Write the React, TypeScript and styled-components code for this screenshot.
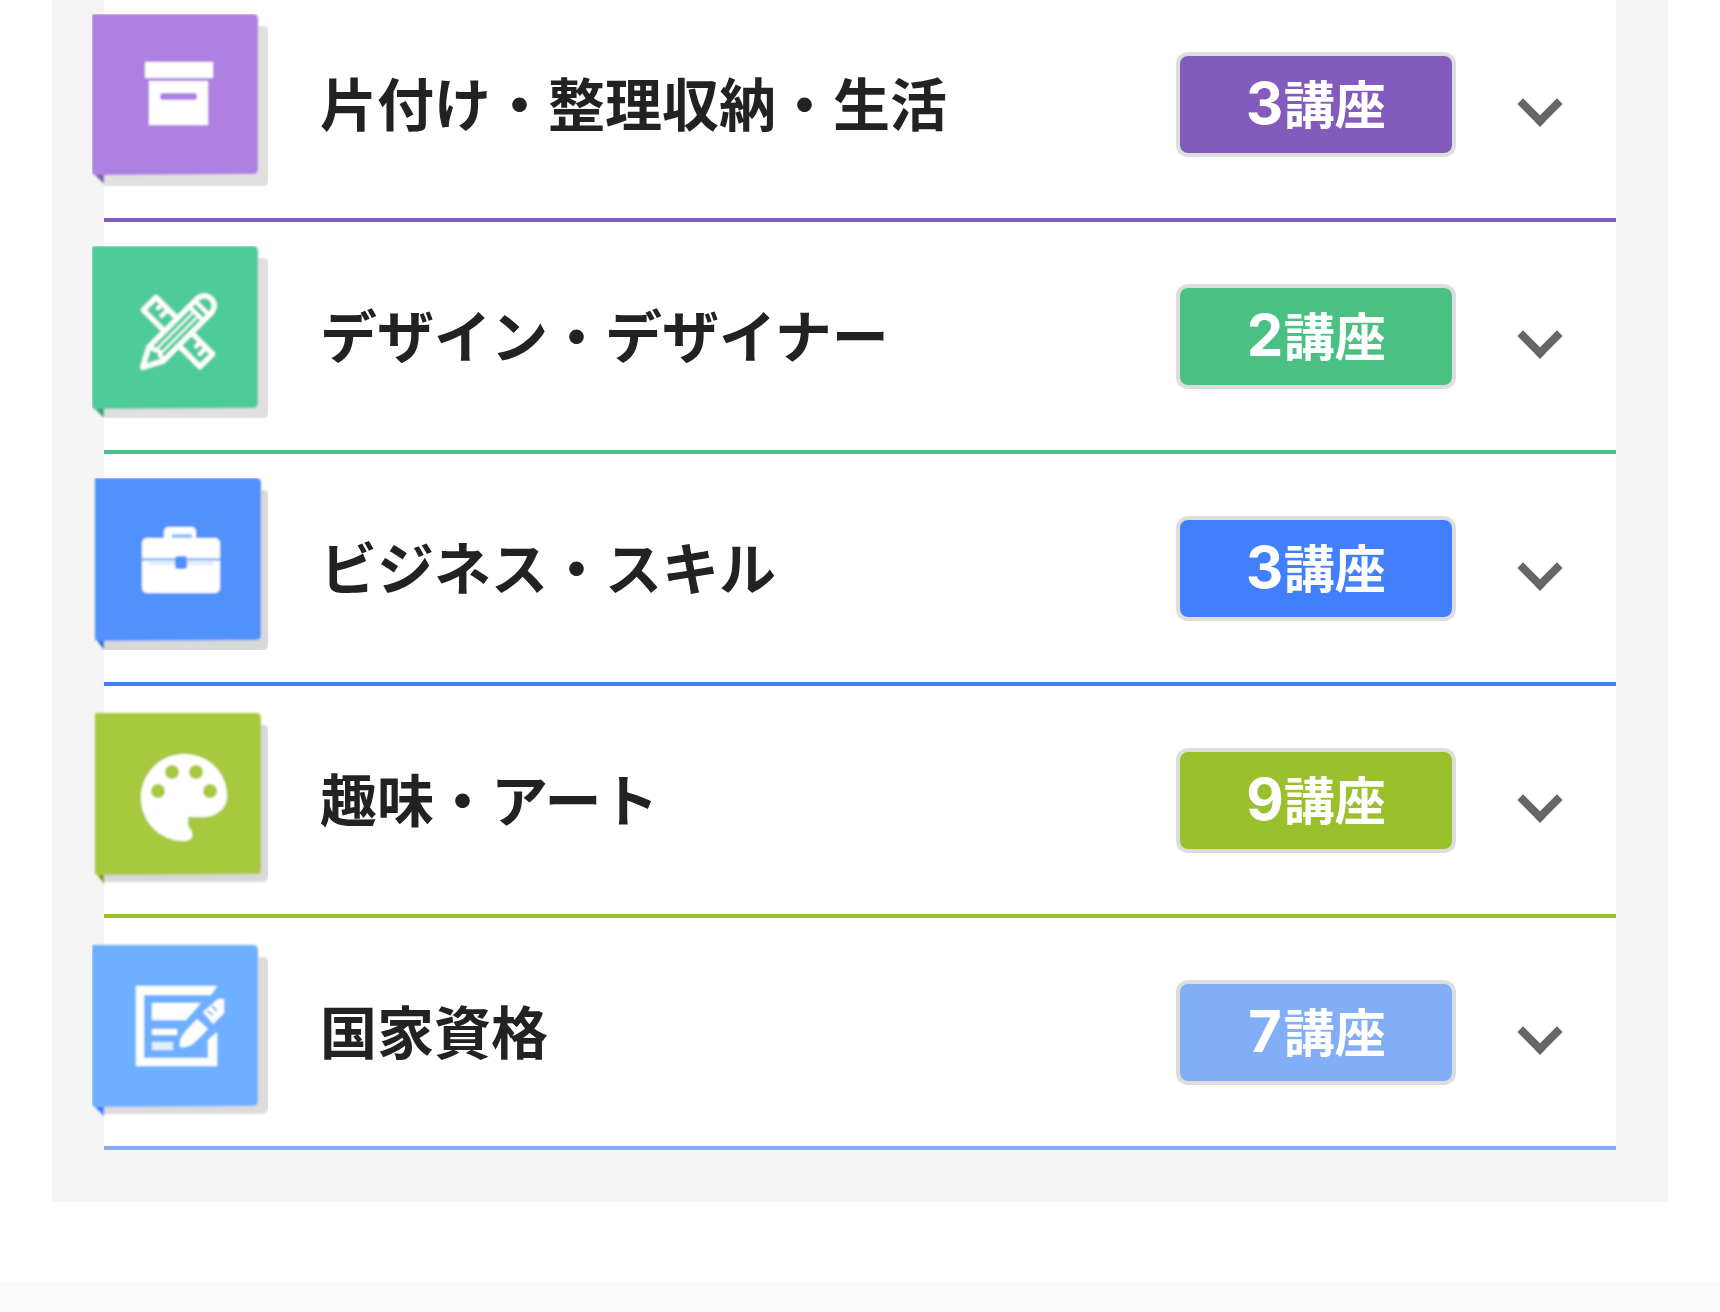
import React, { useState } from "react";
import styled, { createGlobalStyle } from "styled-components";

const GlobalStyle = createGlobalStyle`
  *, *::before, *::after { box-sizing: border-box; }
  body {
    margin: 0;
    background: #fff;
    color: #222;
    font-family: "Noto Sans CJK JP", sans-serif;
  }
`;

const Main = styled.main`
  display: flow-root;
`;

const Panel = styled.section`
  margin: -10px 52px 80px;
  padding: 0 52px 52px;
  background: #f5f5f5;
`;

const List = styled.ul`
  margin: 0;
  padding: 0;
  list-style: none;
  background: #fff;
`;

const Row = styled.li<{ $color: string }>`
  border-bottom: 4px solid ${(p) => p.$color};
`;

const RowButton = styled.button`
  display: flex;
  align-items: center;
  width: 100%;
  min-height: 228px;
  margin: 0;
  padding: 0 60px 0 0;
  border: 0;
  background: none;
  color: inherit;
  font: inherit;
  text-align: left;
  cursor: pointer;
`;

const Tile = styled.svg`
  flex: none;
  width: 176px;
  height: 180px;
  margin-left: -12px;
`;

const Title = styled.span`
  flex: 1;
  min-width: 0;
  padding: 0 0 6px 52px;
  font-size: 57px;
  font-weight: 700;
  line-height: 80px;
`;

const Badge = styled.span<{ $color: string }>`
  display: flex;
  flex: none;
  align-items: baseline;
  justify-content: center;
  width: 280px;
  padding: 6px 0 10px;
  border: 4px solid #ddd;
  border-radius: 12px;
  background: ${(p) => p.$color};
  color: #fff;
  font-size: 51px;
  font-weight: 700;
  line-height: 80px;
`;

const Count = styled.span`
  font-family: Inter, "Noto Sans CJK JP", sans-serif;
  font-size: 58px;
  font-variant-numeric: tabular-nums;
`;

const Chevron = styled.span<{ $open: boolean }>`
  flex: none;
  width: 32px;
  height: 32px;
  margin-left: 68px;
  border: solid #666;
  border-width: 0 8px 8px 0;
  transform: rotate(${(p) => (p.$open ? 225 : 45)}deg);
`;

const Footer = styled.footer`
  min-height: 30px;
  background: #fafafa;
`;

type Kind = "archive" | "design" | "business" | "art" | "license";

function Glyph({ kind, tile }: { kind: Kind; tile: string }) {
  switch (kind) {
    case "archive":
      return (
        <g fill="#fff">
          <rect x="53" y="48" width="68" height="16" />
          <rect x="57" y="67" width="59" height="44" />
          <rect x="68" y="79" width="37" height="7" rx="3" fill={tile} />
        </g>
      );
    case "design":
      return (
        <g transform="translate(86 86)" fill={tile} stroke="#fff" strokeWidth="5" strokeLinejoin="round">
          <g transform="rotate(45)">
            <rect x="-40" y="-9" width="80" height="18" />
            <path d="M-31 -8V-1M-23 -8V2M23 -8V-1M31 -8V2" strokeWidth="4" />
          </g>
          <g transform="rotate(-45)">
            <path d="M-50 0L-31 -10H38Q47 -8 47 0T38 10H-31Z" />
            <path d="M-31 -3H26M-31 3H26" strokeWidth="2" />
            <path d="M26 -10V10M34 -10V10" strokeWidth="4" />
            <path d="M-31 -10L-27 0L-31 10" fill="none" strokeWidth="4" />
          </g>
        </g>
      );
    case "business":
      return (
        <g fill="#fff">
          <path d="M72 60V54Q72 49 77 49H99Q104 49 104 54V60Z" />
          <rect x="50" y="60" width="78" height="55" rx="5" />
          <rect x="80" y="56" width="20" height="4" fill={tile} opacity="0.6" />
          <rect x="50" y="80" width="78" height="3" fill={tile} opacity="0.6" />
          <rect x="57" y="84" width="64" height="3" fill={tile} opacity="0.2" />
          <rect x="83" y="78" width="12" height="13" rx="3" fill={tile} />
        </g>
      );
    case "art":
      return (
        <g fill="#fff">
          <path d="M92 44C68 44 49 64 49 88C49 112 68 131 92 131C98 131 101 128 100 124C100 118 96 119 96 114V107H111C125 107 135 98 135 86C135 62 116 44 92 44Z" />
          <g fill={tile}>
            <circle cx="66" cy="81" r="7" />
            <circle cx="80" cy="62" r="7" />
            <circle cx="104" cy="62" r="7" />
            <circle cx="118" cy="81" r="7" />
          </g>
        </g>
      );
    case "license":
      return (
        <g fill="#fff">
          <path d="M44 44H125L119 53H52V116H116V98L125 90V124H44Z" />
          <path d="M60 61H109L94 78H60Z" />
          <rect x="60" y="87" width="25" height="6" />
          <rect x="60" y="100" width="21" height="8" opacity="0.8" />
          <path d="M88 105Q87 96 93 90L105 77L116 87L103 100Q97 106 88 105Z" />
          <path d="M111 70L126 57H132V71L121 82Z" />
          <path d="M115 69L121 73M120 64L125 69" stroke={tile} strokeWidth="2" />
        </g>
      );
  }
}

interface Category {
  kind: Kind;
  title: string;
  count: number;
  color: string;
  tile: string;
  fold: string;
  shadow: string;
  x: number;
  top: number;
  bottom: number;
  end: number;
}

const categories: Category[] = [
  { kind: "archive", title: "片付け・整理収納・生活", count: 3, color: "#835bbc", tile: "#ad80e1", fold: "#7e62a8", shadow: "#e0e0e0", x: 0, top: 0, bottom: 160, end: 173 },
  { kind: "design", title: "デザイン・デザイナー", count: 2, color: "#4bc083", tile: "#4ecb99", fold: "#3e9c79", shadow: "#e0e0e0", x: 0, top: 0, bottom: 162, end: 173 },
  { kind: "business", title: "ビジネス・スキル", count: 3, color: "#427ffd", tile: "#5191fc", fold: "#2672d0", shadow: "#d9d9d9", x: 3, top: 0, bottom: 162, end: 173 },
  { kind: "art", title: "趣味・アート", count: 9, color: "#9ac02c", tile: "#a8c83e", fold: "#7d9c1e", shadow: "#d9d9d9", x: 3, top: 3, bottom: 164, end: 172 },
  { kind: "license", title: "国家資格", count: 7, color: "#82aef8", tile: "#6eb0ff", fold: "#3b7cff", shadow: "#dcdcdc", x: 0, top: 3, bottom: 164, end: 172 },
];

function CategoryTile({ item }: { item: Category }) {
  const { x, top, bottom, end, tile, fold, shadow, kind } = item;
  const right = x + 166;
  const clip = `clip-${kind}`;
  return (
    <Tile viewBox="0 0 176 180" aria-hidden="true">
      <clipPath id={clip}>
        <rect width="176" height={top ? 176 : 172} />
      </clipPath>
      <filter id={`soft-${kind}`} x="-5%" y="-5%" width="110%" height="110%">
        <feGaussianBlur stdDeviation="1" />
      </filter>
      <g clipPath={`url(#${clip})`}>
        <g filter={`url(#soft-${kind})`}>
          <path
            d={`M12 ${bottom - 6}H${right - 6}V${top + 12}H171Q177 ${top + 12} 177 ${top + 18}V${end - 7}Q176 ${end} 169 ${end}H12Z`}
            fill={shadow}
          />
          <path d={`M${x + 1} ${bottom - 1}H12V${bottom + 10}Z`} fill={fold} />
          <path
            d={`M${x} ${top}H${right - 5}Q${right} ${top} ${right} ${top + 5}V${bottom - 5}Q${right} ${bottom} ${right - 5} ${bottom}L${x + 3} ${bottom + 1}L${x} ${bottom}Z`}
            fill={tile}
          />
          <Glyph kind={kind} tile={tile} />
        </g>
      </g>
    </Tile>
  );
}

function CategoryRow({ item }: { item: Category }) {
  const [open, setOpen] = useState(false);
  return (
    <Row $color={item.color}>
      <RowButton type="button" aria-expanded={open} onClick={() => setOpen(!open)}>
        <CategoryTile item={item} />
        <Title>{item.title}</Title>
        <Badge $color={item.color}>
          <Count>{item.count}</Count>講座
        </Badge>
        <Chevron $open={open} />
      </RowButton>
    </Row>
  );
}

export default function App() {
  return (
    <div lang="ja">
      <GlobalStyle />
      <Main>
        <Panel>
          <List>
            {categories.map((item) => (
              <CategoryRow key={item.kind} item={item} />
            ))}
          </List>
        </Panel>
      </Main>
      <Footer />
    </div>
  );
}
